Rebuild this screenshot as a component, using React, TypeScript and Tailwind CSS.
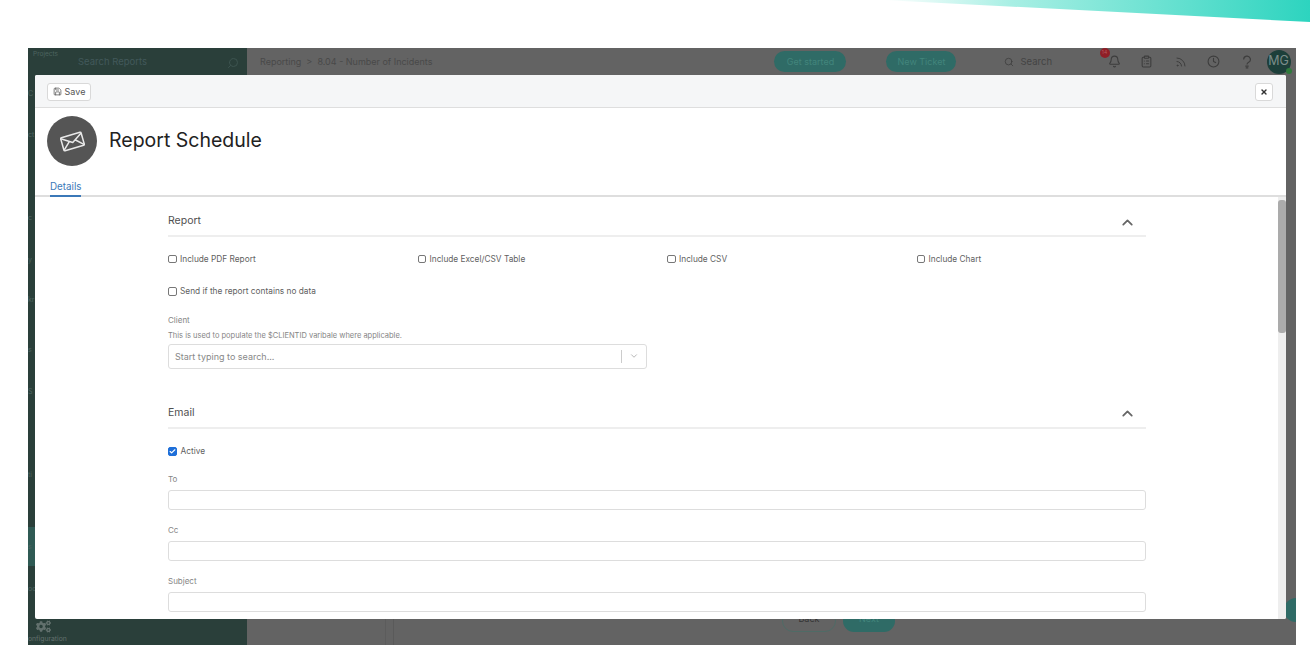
import { Bell, Check, ChevronDown, ChevronUp, ClipboardList, Clock, Rss, Save, Search, X } from "lucide-react";
import { FaCogs } from "react-icons/fa";

const font = { fontFamily: "Inter, 'Noto Sans', sans-serif" };

function SectionTitle({ title }: { title: string }) {
  return (
    <div className="flex h-[30px] items-center justify-between border-b-2 border-[#eeeeee]">
      <span className="text-[10.5px] text-[#505050]">{title}</span>
      <ChevronUp className="mr-[10px] mt-[2px] h-[17px] w-[17px] text-[#666666]" strokeWidth={2.5} />
    </div>
  );
}

function Checkbox({ label, checked }: { label: string; checked?: boolean }) {
  return (
    <div className="flex items-center gap-[3.5px]">
      {checked ? (
        <span className="box-content flex h-[7px] w-[7px] items-center justify-center rounded-[2px] border border-[#1e6fd9] bg-[#1e6fd9]">
          <Check className="h-[7px] w-[7px] text-white" strokeWidth={4} />
        </span>
      ) : (
        <span className="box-content h-[6.5px] w-[6.5px] rounded-[2px] border border-[#777777]" />
      )}
      <span className="text-[8.3px] text-[#5f5f5f]">{label}</span>
    </div>
  );
}

function TextField({ label }: { label: string }) {
  return (
    <div className="flex flex-col">
      <span className="h-[16px] text-[8px] leading-[10px] text-[#858585]">{label}</span>
      <div className="h-[20px] rounded-[3px] border border-[#dddddd] bg-white" />
    </div>
  );
}

function TopBar() {
  return (
    <div className="flex h-[27px] items-center bg-[#636363]">
      <span className="ml-[13px] mt-[1px] text-[9px] text-[#494949]">Reporting &nbsp;&gt;&nbsp; 8.04 - Number of Incidents</span>
      <div className="ml-[342px] flex h-[21px] w-[72px] items-center justify-center rounded-full bg-[#2f6b66] text-[9px] text-[#42857c]">
        Get started
      </div>
      <div className="ml-[40px] flex h-[21px] w-[70px] items-center justify-center rounded-full bg-[#2f6b66] text-[9px] text-[#42857c]">
        New Ticket
      </div>
      <Search className="ml-[48px] h-[10px] w-[10px] text-[#3f3f3f]" />
      <span className="ml-[6px] mt-[2px] text-[9.5px] text-[#434343]">Search</span>
      <div className="relative ml-[56px]">
        <Bell className="h-[13px] w-[13px] text-[#3d3d3d]" />
        <span className="absolute -left-[8.5px] -top-[7px] flex h-[10px] w-[10px] items-center justify-center rounded-full bg-[#8f1f27] text-[5px] text-[#b65a5f]">
          14
        </span>
      </div>
      <ClipboardList className="ml-[19px] h-[13px] w-[13px] text-[#3d3d3d]" />
      <Rss className="ml-[21.5px] h-[12px] w-[12px] text-[#3d3d3d]" />
      <Clock className="ml-[20.5px] h-[13px] w-[13px] text-[#3d3d3d]" />
      <svg viewBox="0 0 12 16" className="ml-[21.5px] h-[14px] w-[10px] text-[#3d3d3d]" fill="none" stroke="currentColor" strokeWidth="1.4">
        <path d="M2 5a4 4 0 1 1 6 3.4C6.8 9.1 6 9.8 6 11" />
        <path d="M4 13h4M4.5 15h3" />
      </svg>
      <div className="relative ml-[15px] flex h-[24px] w-[24px] items-center justify-center rounded-full bg-[#1d3f3a] text-[12.5px] text-[#7c8d8a]">
        MG
        <span className="absolute -right-[1px] bottom-0 h-[6px] w-[6px] rounded-full bg-[#2f7a3c]" />
      </div>
    </div>
  );
}

function Sidebar() {
  return (
    <div className="flex w-[219px] flex-col overflow-hidden bg-[#2a3f3a]">
      <div className="relative h-[27px] shrink-0">
        <span className="absolute left-[5px] top-[2px] text-[6.5px] text-[#4d6560]">Projects</span>
        <div className="flex h-full items-center justify-between pl-[50px] pr-[8px] pt-[2px]">
          <span className="text-[9.5px] text-[#42595a]">Search Reports</span>
          <Search className="h-[12px] w-[12px] -scale-x-100 text-[#3d5450]" />
        </div>
      </div>
      {/* nav labels, only the first letters show beside the modal */}
      <div className="flex-1 text-[7px] leading-[10px] text-[#4d6560]">
        <div className="mt-[14px] h-[10px]">C</div>
        <div className="mt-[31px] h-[10px]">ct</div>
        <div className="mt-[73px] h-[10px]">c</div>
        <div className="mt-[32px] h-[10px]">y</div>
        <div className="mt-[30px] h-[10px]">kr</div>
        <div className="mt-[40px] h-[10px]">s</div>
        <div className="mt-[32px] h-[10px]">S</div>
        <div className="mt-[73px] h-[10px]">ti</div>
        <div className="mt-[47px] flex h-[39px] items-center bg-[#2f5a54]">s</div>
        <div className="mt-[18px] h-[10px]">oo</div>
      </div>
      <div className="h-[26px] shrink-0 pl-[7px]">
        <FaCogs className="ml-[1px] h-[15px] w-[15px] text-[#62706d]" />
        <span className="-ml-[7px] block whitespace-nowrap text-[6.8px] leading-[9px] text-[#62706d]">onfiguration</span>
      </div>
    </div>
  );
}

function EnvelopeIcon() {
  return (
    <svg viewBox="0 0 28 28" className="h-[27px] w-[27px] text-[#e8e8e8]" fill="none" stroke="currentColor" strokeWidth="1.6" strokeLinejoin="round">
      <g transform="rotate(-16 14 14)">
        <rect x="3" y="7" width="22" height="14" rx="1" />
        <path d="M3 8l11 7 11-7M3 20.5l8-7.5M25 20.5l-8-7.5" />
      </g>
    </svg>
  );
}

export default function App() {
  return (
    <div className="relative h-[663px] w-[1310px] overflow-hidden bg-white" style={font}>
      {/* teal wedge top right */}
      <svg viewBox="0 0 427 23" className="absolute right-0 top-0 h-[23px] w-[427px]">
        <defs>
          <linearGradient id="wedge" x1="0" x2="1" y1="0" y2="0">
            <stop offset="0" stopColor="#ffffff" />
            <stop offset="0.3" stopColor="#a8efe4" />
            <stop offset="1" stopColor="#2dd4bf" />
          </linearGradient>
        </defs>
        <polygon points="0,0 427,0 427,22" fill="url(#wedge)" />
      </svg>

      <div className="relative ml-[28px] mt-[48px] flex h-[597px] w-[1268px]">
        <Sidebar />
        <div className="flex flex-1 flex-col overflow-hidden bg-[#636363]">
          <TopBar />
          <div className="flex flex-1">
            <div className="w-[139px] border-r border-[#5c5c5c]" />
            <div className="relative ml-[7px] flex flex-1 items-end justify-center border-l border-[#5a5a5a]">
              <div className="absolute bottom-[13px] left-[388px] flex h-[22px] w-[54px] items-center justify-center rounded-full border border-[#4f6b66] pb-[4px] text-[9px] text-[#333333]">
                Back
              </div>
              <div className="absolute bottom-[13px] left-[449px] flex h-[22px] w-[52px] items-center justify-center rounded-full bg-[#2f6b66] pb-[4px] text-[9px] text-[#42857c]">
                Next
              </div>
              <div className="absolute bottom-[23px] -right-[12px] h-[24px] w-[24px] rounded-full bg-[#2f6b66]" />
            </div>
          </div>
        </div>

        {/* modal */}
        <div className="absolute left-[7px] top-[27px] flex h-[544px] w-[1251px] flex-col overflow-hidden rounded-[2px] bg-white">
          <div className="flex h-[33px] shrink-0 items-center justify-between border-b border-[#dedede] bg-[#f5f6f7] pl-[12px] pr-[13px] pt-[1px]">
            <div className="flex h-[18px] w-[44px] items-center justify-center gap-[3px] rounded-[3px] border border-[#d9d9d9] bg-white text-[9px] text-[#555555]">
              <Save className="h-[9px] w-[9px]" />
              Save
            </div>
            <div className="flex h-[18px] w-[18px] items-center justify-center rounded-[3px] border border-[#d9d9d9] bg-white">
              <X className="h-[8px] w-[8px] text-[#333333]" strokeWidth={4} />
            </div>
          </div>

          <div className="flex h-[68px] shrink-0 items-center pb-[2px] pl-[12px]">
            <div className="flex h-[50px] w-[50px] items-center justify-center rounded-full bg-[#555555]">
              <EnvelopeIcon />
            </div>
            <span className="ml-[12px] text-[19.5px] text-[#222222]">Report Schedule</span>
          </div>

          <div className="flex h-[21px] shrink-0 items-end border-b-2 border-[#dedede] pl-[15px]">
            <span className="-mb-[2px] border-b-2 border-[#3b78b8] text-[9.8px] text-[#3b78b8]">Details</span>
          </div>

          <div className="flex min-h-0 flex-1">
            <div className="min-w-0 flex-1 overflow-hidden pl-[133px] pr-[132px] pt-[10px]">
              <SectionTitle title="Report" />
              <div className="mt-[16px] grid grid-cols-[repeat(4,249.5px)]">
                <Checkbox label="Include PDF Report" />
                <Checkbox label="Include Excel/CSV Table" />
                <Checkbox label="Include CSV" />
                <Checkbox label="Include Chart" />
              </div>
              <div className="mt-[20px]">
                <Checkbox label="Send if the report contains no data" />
              </div>
              <div className="mt-[17px] text-[8px] leading-[10px] text-[#858585]">Client</div>
              <div className="mt-[6px] text-[7.5px] leading-[10px] text-[#858585]">
                This is used to populate the $CLIENTID varibale where applicable.
              </div>
              <div className="mt-[3px] flex h-[25px] w-[479px] items-center justify-between rounded-[3px] border border-[#dddddd] pl-[6px]">
                <span className="text-[9px] text-[#888888]">Start typing to search...</span>
                <div className="flex items-center">
                  <span className="h-[13px] border-l border-[#cccccc]" />
                  <ChevronDown className="mx-[7px] h-[10px] w-[10px] text-[#aaaaaa]" />
                </div>
              </div>

              <div className="mt-[30px]">
                <SectionTitle title="Email" />
              </div>
              <div className="mt-[16px]">
                <Checkbox label="Active" checked />
              </div>
              <div className="mt-[17px] flex flex-col gap-[15px]">
                <TextField label="To" />
                <TextField label="Cc" />
                <TextField label="Subject" />
              </div>
            </div>
            {/* scrollbar */}
            <div className="w-[8px] shrink-0 bg-[#eeeeee] pt-[3px]">
              <div className="h-[133px] rounded-[3px] bg-[#ababab]" />
            </div>
          </div>
        </div>
      </div>
    </div>
  );
}
